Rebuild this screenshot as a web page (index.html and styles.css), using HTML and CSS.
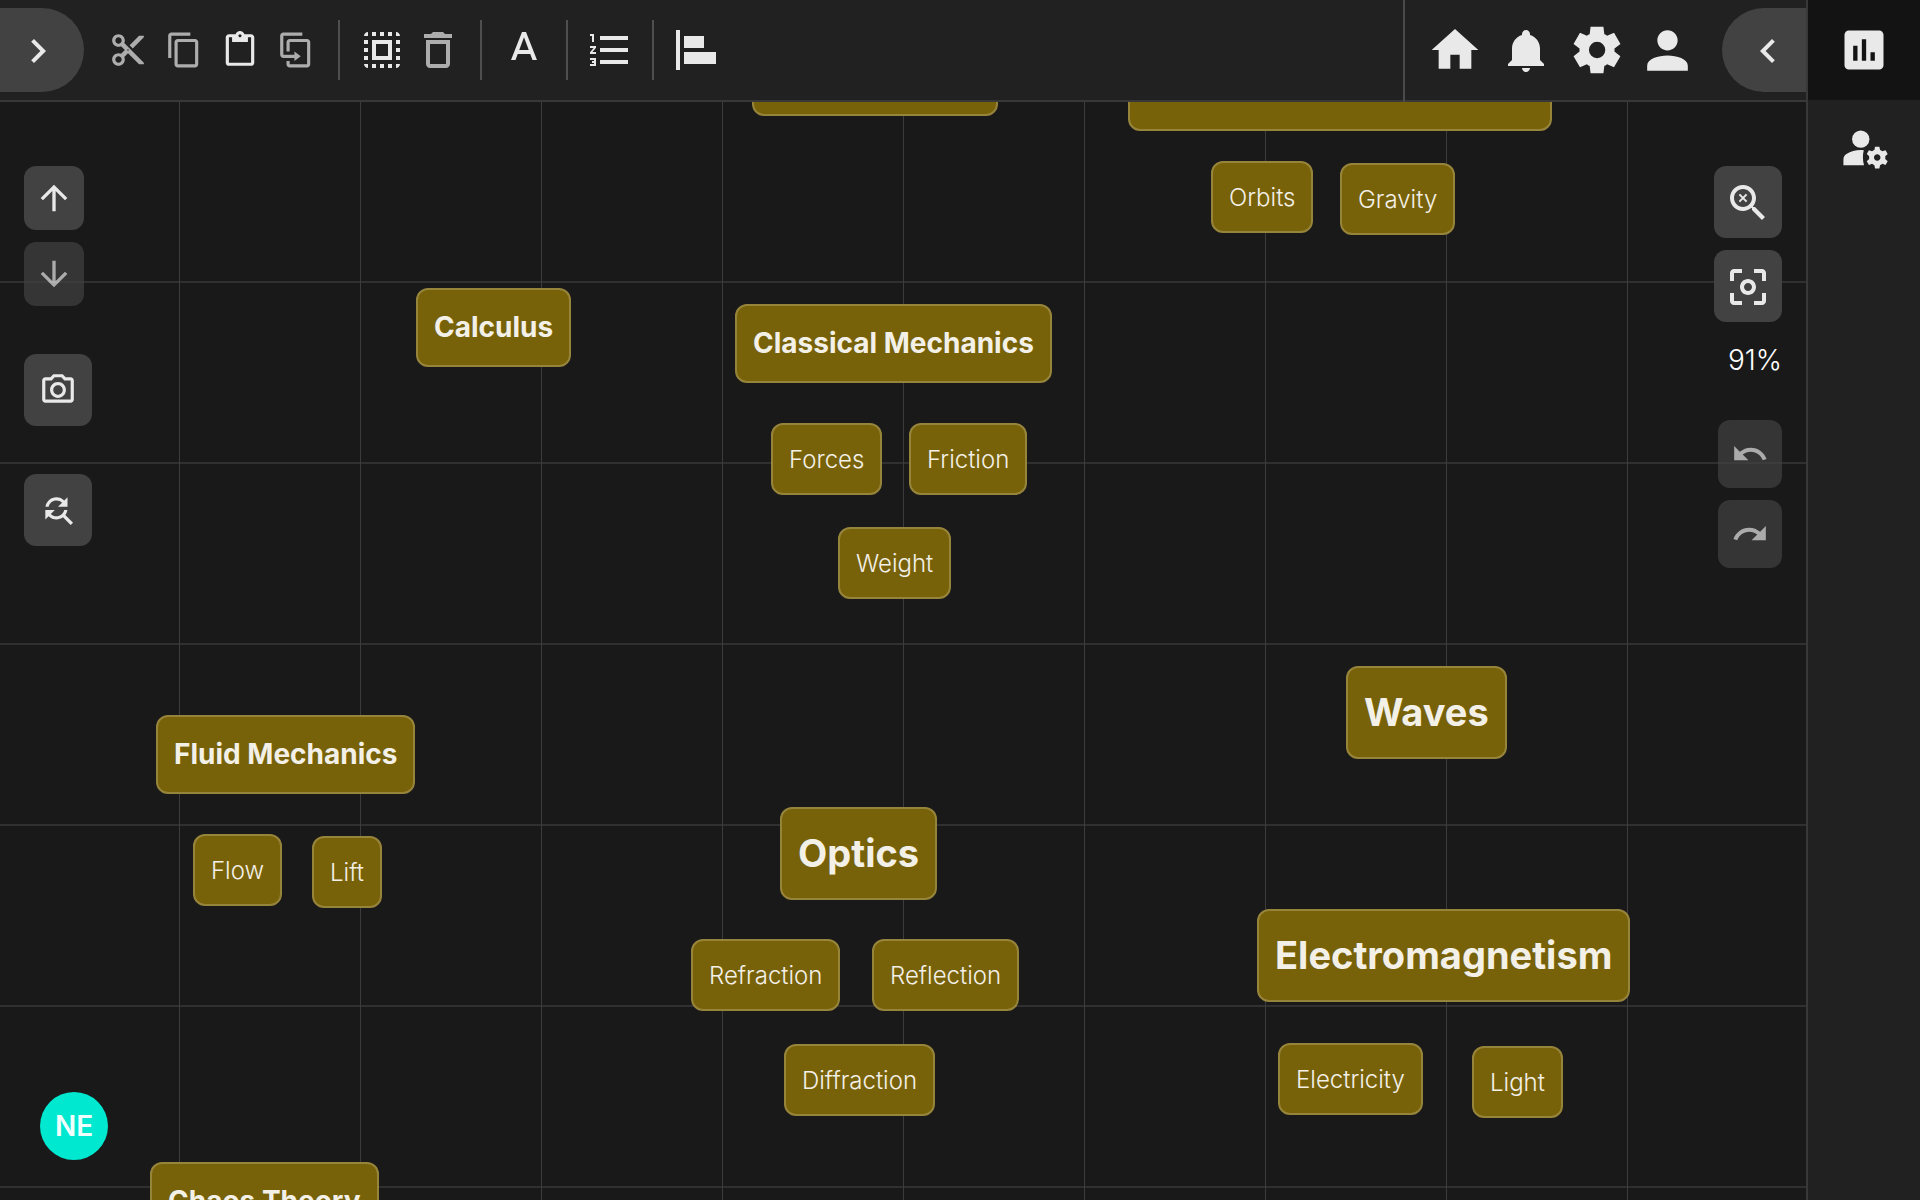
FILE: index.html
```html
<!DOCTYPE html>
<html lang="en">
<head>
<meta charset="utf-8">
<title>Physics map</title>
<link rel="stylesheet" href="styles.css">
</head>
<body>
<div class="app">
  <div class="workspace">
    <header class="topbar">
      <button class="drawer drawer-left" aria-label="Open left panel"><svg class="icon-lg" viewBox="0 0 24 24"><path d="M10 6 8.59 7.41 13.17 12l-4.58 4.59L10 18l6-6z"/></svg></button>
      <div class="tools">
        <div class="group">
          <button class="tool" aria-label="Cut" disabled><svg class="icon-md" viewBox="0 0 24 24"><path d="M9.64 7.64c.23-.5.36-1.05.36-1.64 0-2.21-1.79-4-4-4S2 3.79 2 6s1.79 4 4 4c.59 0 1.14-.13 1.64-.36L10 12l-2.36 2.36C7.14 14.13 6.59 14 6 14c-2.21 0-4 1.79-4 4s1.79 4 4 4 4-1.79 4-4c0-.59-.13-1.14-.36-1.64L12 14l7 7h3v-1L9.64 7.64zM6 8c-1.1 0-2-.89-2-2s.9-2 2-2 2 .89 2 2-.9 2-2 2zm0 12c-1.1 0-2-.89-2-2s.9-2 2-2 2 .89 2 2-.9 2-2 2zm6-7.5c-.28 0-.5-.22-.5-.5s.22-.5.5-.5.5.22.5.5-.22.5-.5.5zM19 3l-6 6 2 2 7-7V3z"/></svg></button>
          <button class="tool" aria-label="Copy" disabled><svg class="icon-md" viewBox="0 0 24 24"><path d="M16 1H4c-1.1 0-2 .9-2 2v14h2V3h12V1zm3 4H8c-1.1 0-2 .9-2 2v14c0 1.1.9 2 2 2h11c1.1 0 2-.9 2-2V7c0-1.1-.9-2-2-2zm0 16H8V7h11v14z"/></svg></button>
          <button class="tool" aria-label="Paste"><svg class="icon-md" viewBox="0 0 24 24"><path d="M19 2h-4.18C14.4.84 13.3 0 12 0c-1.3 0-2.4.84-2.82 2H5c-1.1 0-2 .9-2 2v16c0 1.1.9 2 2 2h14c1.1 0 2-.9 2-2V4c0-1.1-.9-2-2-2zm-7 0c.55 0 1 .45 1 1s-.45 1-1 1-1-.45-1-1 .45-1 1-1zm7 18H5V4h2v3h10V4h2v16z"/></svg></button>
          <button class="tool" aria-label="Duplicate" disabled><svg class="icon-md" viewBox="0 0 24 24"><path d="M4 3h12V1H4c-1.1 0-2 .9-2 2v12c0 1.1.9 2 2 2h7v2l4-3-4-3v2H4z"/><path d="M19 5H8c-1.1 0-2 .9-2 2v6h2V7h11v14H8v-2H6v2c0 1.1.9 2 2 2h11c1.1 0 2-.9 2-2V7c0-1.1-.9-2-2-2z"/></svg></button>
        </div>
        <div class="group">
          <button class="tool" aria-label="Select all"><svg class="icon-lg" viewBox="0 0 24 24"><path d="M3 5h2V3c-1.1 0-2 .9-2 2zm0 8h2v-2H3v2zm4 8h2v-2H7v2zM3 9h2V7H3v2zm10-6h-2v2h2V3zm6 0v2h2c0-1.1-.9-2-2-2zM5 21v-2H3c0 1.1.9 2 2 2zm-2-4h2v-2H3v2zM9 3H7v2h2V3zm2 18h2v-2h-2v2zm8-8h2v-2h-2v2zm0 8c1.1 0 2-.9 2-2h-2v2zm0-12h2V7h-2v2zm0 8h2v-2h-2v2zm-4 4h2v-2h-2v2zm0-16h2V3h-2v2zM7 17h10V7H7v10zm2-8h6v6H9V9z"/></svg></button>
          <button class="tool" aria-label="Delete" disabled><svg class="icon-lg" viewBox="0 0 24 24"><path d="M6 19c0 1.1.9 2 2 2h8c1.1 0 2-.9 2-2V7H6v12zM8 9h8v10H8V9zm7.5-5l-1-1h-5l-1 1H5v2h14V4z"/></svg></button>
        </div>
        <div class="group">
          <button class="tool" aria-label="Text style"><svg class="icon-lg" viewBox="0 0 24 24"><path d="M11 3 5.5 17h2.25l1.12-3h6.25l1.12 3h2.25L13 3h-2zm-1.38 9L12 5.67 14.38 12H9.62z"/></svg></button>
        </div>
        <div class="group">
          <button class="tool" aria-label="Numbering"><svg class="icon-lg" viewBox="0 0 24 24"><path d="M2 17h2v.5H3v1h1v.5H2v1h3v-4H2v1zm1-9h1V4H2v1h1v3zm-1 3h1.8L2 13.1v.9h3v-1H3.2L5 10.9V10H2v1zm5-6v2h14V5H7zm0 14h14v-2H7v2zm0-6h14v-2H7v2z"/></svg></button>
        </div>
        <div class="group">
          <button class="tool" aria-label="Align left"><svg class="icon-lg" viewBox="0 0 24 24"><path d="M2 2h2v20H2zM6 5h10v6H6zM6 13h16v6H6z"/></svg></button>
        </div>
      </div>
      <nav class="account">
        <button class="nav-button" aria-label="Home"><svg class="icon-xl" viewBox="0 0 24 24"><path d="M10 20v-6h4v6h5v-8h3L12 3 2 12h3v8z"/></svg></button>
        <button class="nav-button" aria-label="Notifications"><svg class="icon-xl" viewBox="0 0 56 56"><path d="M24 12c0-2.2 1.8-4 4-4s4 1.8 4 4v.9c6 1.8 10 7.3 10 13.6V38l4 4v2H10v-2l4-4V26.5c0-6.3 4-11.8 10-13.6zM24 46h8c0 2.2-1.8 4-4 4s-4-1.8-4-4z"/></svg></button>
        <button class="nav-button" aria-label="Settings"><svg class="icon-xl" viewBox="0 -960 960 960"><path d="m370-80-16-128q-13-5-24.500-12T307-235l-119 50L78-375l103-78q-1-7-1-13.500v-27q0-6.500 1-13.500L78-585l110-190 119 50q11-8 23-15t24-12l16-128h220l16 128q13 5 24.500 12t22.500 15l119-50 110 190-103 78q1 7 1 13.500v27q0 6.500-2 13.500l103 78-110 190-118-50q-11 8-23 15t-24 12L590-80H370Zm112-260q58 0 99-41t41-99q0-58-41-99t-99-41q-59 0-99.500 41T342-480q0 58 40.500 99t99.500 41Z"/></svg></button>
        <button class="nav-button" aria-label="Profile"><svg class="icon-xxl" viewBox="0 0 24 24"><path d="M12 12c2.21 0 4-1.790 4-4s-1.790-4-4-4-4 1.790-4 4 1.790 4 4 4zm0 2c-3.700 0-8 1.340-8 4v2h16v-2c0-2.660-4.300-4-8-4z"/></svg></button>
      </nav>
      <button class="drawer drawer-right" aria-label="Open right panel"><svg class="icon-lg" viewBox="0 0 24 24"><path d="M15.41 7.41 14 6l-6 6 6 6 1.41-1.41L10.83 12z"/></svg></button>
    </header>

    <main class="canvas">
      <div class="node section" style="left:752px;top:-65px;width:246px"></div>
      <div class="node topic" style="left:1128px;top:-64px;width:424px"></div>
      <div class="node" style="left:1211px;top:59px">Orbits</div>
      <div class="node" style="left:1340px;top:61px">Gravity</div>
      <div class="node section" style="left:416px;top:186px">Calculus</div>
      <div class="node section" style="left:735px;top:202px">Classical Mechanics</div>
      <div class="node" style="left:771px;top:321px">Forces</div>
      <div class="node" style="left:909px;top:321px">Friction</div>
      <div class="node" style="left:838px;top:425px">Weight</div>
      <div class="node topic" style="left:1346px;top:564px">Waves</div>
      <div class="node section" style="left:156px;top:613px">Fluid Mechanics</div>
      <div class="node" style="left:193px;top:732px">Flow</div>
      <div class="node" style="left:312px;top:734px">Lift</div>
      <div class="node topic" style="left:780px;top:705px">Optics</div>
      <div class="node" style="left:691px;top:837px">Refraction</div>
      <div class="node" style="left:872px;top:837px">Reflection</div>
      <div class="node" style="left:784px;top:942px">Diffraction</div>
      <div class="node topic" style="left:1257px;top:807px">Electromagnetism</div>
      <div class="node" style="left:1278px;top:941px">Electricity</div>
      <div class="node" style="left:1472px;top:944px">Light</div>
      <div class="node section" style="left:150px;top:1060px">Chaos Theory</div>

      <div class="controls controls-left">
        <div class="stack">
          <button class="control narrow" aria-label="Move up"><svg class="icon-arrow" viewBox="0 0 24 24"><path d="m4 12 1.41 1.41L11 7.83V20h2V7.83l5.58 5.59L20 12l-8-8-8 8z"/></svg></button>
          <button class="control narrow" aria-label="Move down" disabled><svg class="icon-arrow" viewBox="0 0 24 24"><path d="m20 12-1.41-1.41L13 16.17V4h-2v12.17l-5.58-5.59L4 12l8 8 8-8z"/></svg></button>
        </div>
        <button class="control" aria-label="Snapshot"><svg class="icon-md" viewBox="0 0 24 24"><path d="M14.12 4l1.83 2H20v12H4V6h4.05l1.83-2h4.24M15 2H9L7.17 4H4c-1.1 0-2 .9-2 2v12c0 1.1.9 2 2 2h16c1.1 0 2-.9 2-2V6c0-1.1-.9-2-2-2h-3.17L15 2zm-3 7c1.65 0 3 1.35 3 3s-1.35 3-3 3-3-1.35-3-3 1.35-3 3-3m0-2c-2.76 0-5 2.24-5 5s2.24 5 5 5 5-2.24 5-5-2.24-5-5-5z"/></svg></button>
        <button class="control" aria-label="Find and replace"><svg class="icon-md" viewBox="0 0 24 24"><path d="M11 6c1.38 0 2.63.56 3.54 1.46L12 10h6V4l-2.05 2.05C14.68 4.78 12.93 4 11 4c-3.53 0-6.43 2.61-6.92 6H6.1c.46-2.28 2.48-4 4.9-4zm5.64 9.14c.66-.9 1.12-1.97 1.28-3.14H15.9c-.46 2.28-2.48 4-4.9 4-1.38 0-2.63-.56-3.54-1.46L10 12H4v6l2.05-2.05C7.32 17.22 9.07 18 11 18c1.55 0 2.98-.51 4.14-1.36L20 21.49 21.49 20l-4.85-4.86z"/></svg></button>
      </div>

      <div class="controls controls-right">
        <div class="stack">
          <button class="control view" aria-label="Reset zoom"><svg class="icon-lg" viewBox="0 0 24 24"><path d="M15.5 14h-.79l-.28-.27C15.41 12.59 16 11.11 16 9.5 16 5.91 13.09 3 9.5 3S3 5.91 3 9.5 5.91 16 9.5 16c1.61 0 3.09-.59 4.23-1.57l.27.28v.79l5 4.99L20.49 19l-4.99-5zm-6 0C7.01 14 5 11.99 5 9.5S7.01 5 9.5 5 14 7.01 14 9.500 11.99 14 9.5 14z"/><path d="m7.700 7.700 3.600 3.600m0-3.600-3.600 3.600" stroke="currentColor" stroke-width="1"/></svg></button>
          <button class="control view" aria-label="Center view"><svg class="icon-lg" viewBox="0 0 24 24"><path d="M5 15H3v4c0 1.1.9 2 2 2h4v-2H5v-4zM5 5h4V3H5c-1.1 0-2 .9-2 2v4h2V5zm14-2h-4v2h4v4h2V5c0-1.1-.9-2-2-2zm0 16h-4v2h4c1.1 0 2-.9 2-2v-4h-2v4zM12 8c-2.21 0-4 1.79-4 4s1.79 4 4 4 4-1.79 4-4-1.79-4-4-4zm0 6c-1.1 0-2-.9-2-2s.9-2 2-2 2 .9 2 2-.9 2-2 2z"/></svg></button>
        </div>
        <output class="zoom-level">91%</output>
        <div class="stack">
          <button class="control compact" aria-label="Undo" disabled><svg class="icon-md" viewBox="0 0 24 24"><path d="M12.5 8c-2.65 0-5.05.99-6.9 2.6L2 7v9h9l-3.62-3.62c1.39-1.16 3.16-1.88 5.12-1.88 3.54 0 6.55 2.31 7.6 5.5l2.37-.78C21.08 11.03 17.15 8 12.5 8z"/></svg></button>
          <button class="control compact" aria-label="Redo" disabled><svg class="icon-md" viewBox="0 0 24 24"><path d="M18.4 10.6C16.55 8.99 14.15 8 11.5 8c-4.65 0-8.58 3.03-9.96 7.22L3.9 16c1.05-3.19 4.05-5.5 7.6-5.5 1.95 0 3.73.72 5.12 1.88L13 16h9V7l-3.6 3.6z"/></svg></button>
        </div>
      </div>

      <div class="avatar">NE</div>
    </main>
  </div>

  <aside class="sidebar">
    <button class="tab active" aria-label="Statistics"><svg class="icon-tab" viewBox="0 0 24 24"><path d="M19 3H5c-1.1 0-2 .9-2 2v14c0 1.1.9 2 2 2h14c1.1 0 2-.9 2-2V5c0-1.1-.9-2-2-2zM9 17H7v-7h2v7zm4 0h-2V7h2v10zm4 0h-2v-4h2v4z"/></svg></button>
    <button class="tab" aria-label="Manage users"><svg class="icon-tab" viewBox="-0.5 1 24 24"><circle cx="10" cy="8" r="4"/><path d="M11.4 13.1c-.45-.07-.93-.1-1.400-.1-2.420 0-4.680.67-6.610 1.820-.88.52-1.390 1.500-1.390 2.530V20h9.500c-.35-1.200-.5-2.500-.5-3.700 0-1.100.12-2.200.4-3.200zM21.350 16.500c0-.22-.03-.42-.06-.63l1.140-1.010-1-1.730-1.450.49c-.32-.27-.68-.48-1.080-.63L18.600 11.500h-2l-.3 1.490c-.4.15-.76.36-1.080.63l-1.450-.49-1 1.730 1.140 1.010c-.03.21-.06.41-.06.63s.03.42.06.63l-1.140 1.010 1 1.730 1.450-.49c.32.27.68.48 1.080.63l.3 1.490h2l.3-1.490c.4-.15.76-.36 1.080-.63l1.450.49 1-1.730-1.140-1.010c.03-.21.06-.41.06-.63zM17.600 18c-.83 0-1.500-.67-1.500-1.500s.67-1.500 1.500-1.500 1.500.67 1.500 1.500-.67 1.500-1.500 1.500z"/></svg></button>
  </aside>
</div>
</body>
</html>
```
FILE: styles.css
```css
* { box-sizing: border-box; }

body {
  margin: 0;
  background: #191919;
  color: #e9e9e9;
  font-family: Inter, "Liberation Sans", sans-serif;
}

button {
  display: flex;
  align-items: center;
  justify-content: center;
  flex: none;
  margin: 0;
  padding: 0;
  border: 0;
  background: none;
  color: inherit;
  font: inherit;
}

svg { display: block; flex: none; fill: currentColor; }

.icon-md { width: 38px; height: 38px; }
.icon-arrow { width: 40px; height: 40px; }
.icon-lg { width: 48px; height: 48px; }
.icon-tab { width: 52px; height: 52px; }
.icon-xl { width: 56px; height: 56px; }
.icon-xxl { width: 61px; height: 61px; }

.app { display: flex; height: 100vh; overflow: hidden; }

.workspace {
  display: flex;
  flex: 1;
  flex-direction: column;
  min-width: 0;
}

/* Top bar */
.topbar {
  display: flex;
  align-items: center;
  flex: none;
  height: 102px;
  border-bottom: 2px solid #383838;
  background: #212121;
}

.drawer { width: 84px; height: 84px; padding-top: 2px; background: #424242; }
.drawer-left { padding-right: 8px; border-radius: 0 42px 42px 0; }
.drawer-right { padding-left: 8px; border-radius: 42px 0 0 42px; }

.tools { display: flex; flex: 1; align-items: center; padding-left: 2px; }
.group { display: flex; align-items: center; height: 60px; padding: 0 14px; }
.group + .group { border-left: 2px solid #4f4f4f; }

.tool { width: 56px; height: 56px; }
.tool:disabled { color: #adadad; }

.account {
  display: flex;
  align-self: stretch;
  margin-bottom: -2px;
  padding: 0 19px 2px 14px;
  border-left: 2px solid #4a4a4a;
}
.nav-button { width: 71px; }

/* Canvas */
.canvas {
  position: relative;
  flex: 1;
  overflow: hidden;
  background-color: #191919;
  background-image:
    linear-gradient(to right, #3c3c3c 1px, transparent 1px),
    linear-gradient(#303030 2px, transparent 2px);
  background-position: -2px -2px;
  background-size: 181px 181px;
}

.node {
  position: absolute;
  min-height: 72px;
  padding: 17px 16px 15px;
  border: 2px solid #97843b;
  border-radius: 12px;
  background: #786209;
  color: #f3f0e7;
  font-size: 24px;
  font-weight: 300;
  line-height: 36px;
  white-space: nowrap;
}
.node.section {
  min-height: 79px;
  padding: 16px;
  font-size: 28px;
  font-weight: 700;
  line-height: 43px;
}
.node.topic {
  min-height: 93px;
  padding: 16px;
  font-size: 38px;
  font-weight: 700;
  line-height: 57px;
}

.controls {
  position: absolute;
  top: 64px;
  display: flex;
  flex-direction: column;
}
.controls-left { left: 24px; gap: 48px; }
.controls-right { right: 24px; align-items: flex-end; }

.stack { display: flex; flex-direction: column; gap: 12px; }

.control {
  width: 68px;
  height: 72px;
  border-radius: 12px;
  background: #424242;
}
.control.view { padding-top: 2px; }
.control.narrow { width: 60px; height: 64px; }
.control.compact { width: 64px; height: 68px; }
.control:disabled { opacity: .7; }

.zoom-level {
  padding: 17px 0 39px;
  color: #fff;
  font-size: 28px;
  font-weight: 300;
  line-height: 42px;
}

.avatar {
  position: absolute;
  bottom: 40px;
  left: 40px;
  display: flex;
  align-items: center;
  justify-content: center;
  width: 68px;
  height: 68px;
  border-radius: 50%;
  background: #00e8d0;
  color: #f0fffd;
  font-size: 28px;
  font-weight: 600;
}

/* Right sidebar */
.sidebar {
  flex: none;
  width: 114px;
  border-left: 2px solid #383838;
  background: #212121;
}
.tab { width: 100%; height: 100px; }
.tab.active { background: #131313; }
```
